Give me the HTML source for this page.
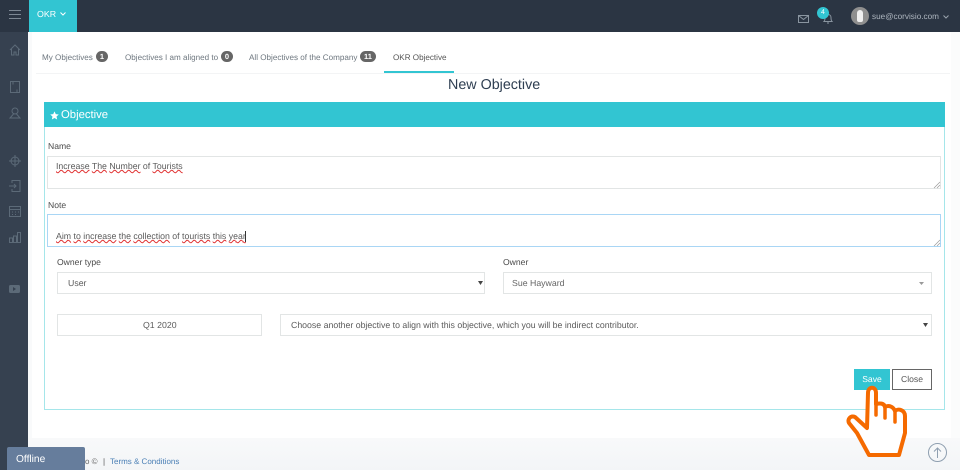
<!DOCTYPE html>
<html><head><meta charset="utf-8">
<style>
*{box-sizing:border-box}
html,body{margin:0;padding:0;width:960px;height:470px;overflow:hidden;background:#fff;font-family:"Liberation Sans",sans-serif;color:#555;text-rendering:geometricPrecision}
.a{position:absolute;white-space:nowrap}
.box{position:absolute;background:#fff;border:1px solid #e2e5e5}
.sp{text-decoration:underline wavy #e03030 1px;text-underline-offset:0;text-decoration-skip-ink:none}
.badge{position:absolute;background:#666;color:#fff;font-size:7.500px;font-weight:bold;border-radius:7px;height:11px;line-height:11px;text-align:center}
.tab{position:absolute;top:52px;font-size:8.100px;color:#6f7880;white-space:nowrap;line-height:11px}
svg{position:absolute;overflow:visible}
.ic{fill:none;stroke:#5c6a78;stroke-width:1}
.lab{position:absolute;font-size:8.600px;color:#4a4a4a;line-height:11px;white-space:nowrap}
.val{font-size:8.750px;color:#5a5a5a;line-height:11px;white-space:nowrap;position:absolute}
</style></head><body>
<div class="a" style="left:0;top:0;width:960px;height:32px;background:#2b3543"></div>
<div class="a" style="left:29px;top:0;width:48px;height:32px;background:#32c5d2"></div>
<div class="a" style="left:37px;top:9px;font-size:8.800px;line-height:11px;color:#fff">OKR</div>
<svg style="left:60px;top:12px" width="6" height="4"><path d="M.5.5 3 3 5.500.5" fill="none" stroke="#fff"/></svg>
<svg style="left:9px;top:10px" width="12" height="10"><path d="M0 .5h12M0 4.500h12M0 8.500h12" stroke="#7d8894" fill="none"/></svg>
<div class="a" style="left:0;top:32px;width:28px;height:438px;background:#364150"></div>
<div class="a" style="left:28px;top:32px;width:932px;height:438px;background:#fff"></div>
<div class="a" style="left:28px;top:32px;width:4px;height:406px;background:#f9fafb"></div>
<div class="a" style="left:951px;top:32px;width:9px;height:406px;background:#fbfcfc"></div>

<svg class="ic" style="left:9px;top:44px" width="12" height="12"><path d="M1 6 6 1l5 5M2.500 5v6h2.500V8h2v3h2.500V5"/></svg>
<svg class="ic" style="left:10px;top:81px" width="10" height="12"><path d="M.5.5h9v11h-9zM3 .5v3M7 8.500v3"/></svg>
<svg class="ic" style="left:9px;top:107px" width="12" height="12"><circle cx="6" cy="4" r="3"/><path d="M4.500 7 1 11h10L7.500 7"/></svg>
<svg class="ic" style="left:9px;top:155px" width="12" height="12"><circle cx="6" cy="6" r="4"/><path d="M6 0v12M0 6h12"/></svg>
<svg class="ic" style="left:9px;top:180px" width="12" height="12"><path d="M3 3V.5h8v11H3V9M0 6h7M5 4l2 2-2 2"/></svg>
<svg class="ic" style="left:9px;top:205px" width="12" height="12"><path d="M.5 1.500h11v10H.5zM.5 4.500h11M3 7h1M6 7h1M9 7h1M3 9.500h1M6 9.500h1"/></svg>
<svg class="ic" style="left:9px;top:231px" width="12" height="12"><path d="M.5 7h3v4.500h-3zM4.500 5h3v6.500h-3zM8.500 1.500h3v10h-3z"/></svg>
<svg style="left:9px;top:285px" width="11" height="8"><rect width="11" height="8" rx="1.500" fill="#5c6a78"/><path d="M4 2v4l3-2z" fill="#364150"/></svg>

<svg class="ic" style="left:798px;top:15px;stroke:#8a95a0" width="11" height="8"><path d="M.5.500h10v7H.5zM.5.500 5.500 4.500 10.500.500"/></svg>
<svg class="ic" style="left:823px;top:13px;stroke:#8a95a0" width="10" height="11"><path d="M1 8.500c1-1 1-2 1-4s1.500-3 3-3 3 1 3 3 0 3 1 4zM4 10h2"/></svg>
<div class="a" style="left:817px;top:7px;width:12px;height:12px;border-radius:50%;background:#32c5d2;color:#fff;font-size:7px;line-height:12px;text-align:center">4</div>
<div class="a" style="left:851px;top:7px;width:18px;height:18px;border-radius:50%;background:#8f8f8f"></div>
<div class="a" style="left:857px;top:10px;width:6px;height:12px;border-radius:3px 3px 2px 2px;background:#f0f0f0"></div>
<div class="a" style="left:872px;top:11px;font-size:8.200px;line-height:11px;color:#aeb6bf">sue@corvisio.com</div>
<svg style="left:943px;top:15px" width="6" height="4"><path d="M.5.5 3 3 5.500.5" fill="none" stroke="#9aa3ad"/></svg>

<div class="tab" style="left:42px">My Objectives</div>
<div class="badge" style="left:96px;top:51px;width:12px">1</div>
<div class="tab" style="left:125px">Objectives I am aligned to</div>
<div class="badge" style="left:221px;top:51px;width:12px">0</div>
<div class="tab" style="left:249px">All Objectives of the Company</div>
<div class="badge" style="left:360px;top:51px;width:16px">11</div>
<div class="tab" style="left:393px;color:#555">OKR Objective</div>
<div class="a" style="left:36px;top:73px;width:914px;height:1px;background:#f3f4f5"></div>
<div class="a" style="left:384px;top:71px;width:70px;height:2px;background:#32c5d2"></div>
<div class="a" style="left:448px;top:76px;font-size:14.300px;line-height:18px;color:#2f3f52">New Objective</div>

<div class="a" style="left:44px;top:102px;width:901px;height:308px;border:1px solid #a5e6ea;border-top:0"></div>
<div class="a" style="left:44px;top:102px;width:901px;height:25px;background:#32c5d2"></div>
<svg style="left:50px;top:111px" width="9" height="9" viewBox="0 0 24 24"><path d="M12 1l3.400 7.400 8 .9-6 5.400 1.700 8L12 18.700 4.900 22.700l1.700-8-6-5.400 8-.9z" fill="#fff"/></svg>
<div class="a" style="left:61px;top:108px;font-size:11.300px;line-height:14px;color:#fff">Objective</div>

<div class="lab" style="left:48px;top:141px">Name</div>
<div class="box" style="left:47px;top:156px;width:894px;height:33px"></div>
<div class="val" style="left:56px;top:161px"><span class="sp">Increase</span> <span class="sp">The</span> <span class="sp">Number</span> of <span class="sp">Tourists</span></div>
<svg style="left:934px;top:182px" width="6" height="6"><path d="M0 6 6 0M3 6l3-3" stroke="#999" stroke-width=".7"/></svg>

<div class="lab" style="left:48px;top:200px">Note</div>
<div class="box" style="left:47px;top:214px;width:894px;height:33px;border-color:#a9d6f5"></div>
<div class="val" style="left:56px;top:231px"><span class="sp">Aim</span> <span class="sp">to</span> <span class="sp">increase</span> <span class="sp">the</span> <span class="sp">collection</span> of <span class="sp">tourists</span> <span class="sp">this</span> <span class="sp">year</span></div>
<div class="a" style="left:245px;top:231px;width:1px;height:11px;background:#333"></div>
<svg style="left:934px;top:240px" width="6" height="6"><path d="M0 6 6 0M3 6l3-3" stroke="#999" stroke-width=".7"/></svg>

<div class="lab" style="left:57px;top:257px">Owner type</div>
<div class="box" style="left:57px;top:272px;width:428px;height:22px"></div>
<div class="val" style="left:68px;top:278px">User</div>
<svg style="left:478px;top:281px" width="5" height="4"><path d="M0 0h5L2.500 4z" fill="#444"/></svg>

<div class="lab" style="left:503px;top:257px">Owner</div>
<div class="box" style="left:503px;top:272px;width:429px;height:22px"></div>
<div class="val" style="left:512px;top:278px;color:#666">Sue Hayward</div>
<svg style="left:919px;top:282px" width="5" height="3"><path d="M0 0h5L2.500 3z" fill="#999"/></svg>

<div class="box" style="left:57px;top:314px;width:205px;height:22px"></div>
<div class="val" style="left:143px;top:320px">Q1 2020</div>
<div class="box" style="left:280px;top:314px;width:652px;height:22px"></div>
<div class="val" style="left:291px;top:320px">Choose another objective to align with this objective, which you will be indirect contributor.</div>
<svg style="left:923px;top:323px" width="5" height="4"><path d="M0 0h5L2.500 4z" fill="#444"/></svg>

<div class="a" style="left:854px;top:369px;width:36px;height:21px;background:#32c5d2;color:#fff;font-size:8.600px;line-height:21px;text-align:center">Save</div>
<div class="a" style="left:892px;top:369px;width:40px;height:21px;border:1px solid #666;background:#fff;color:#555;font-size:8.600px;line-height:19px;text-align:center">Close</div>

<div class="a" style="left:28px;top:438px;width:932px;height:32px;background:linear-gradient(#f8f9fa,#f3f5f7)"></div>
<div class="a" style="left:85px;top:456px;font-size:8px;line-height:11px;color:#666">o ©</div>
<div class="a" style="left:103px;top:456px;font-size:8px;line-height:11px;color:#555">|</div>
<div class="a" style="left:110px;top:456px;font-size:8px;line-height:11px;color:#4a7fb5">Terms &amp; Conditions</div>
<div class="a" style="left:7px;top:447px;width:78px;height:23px;background:#667d9c;border-radius:2px 2px 0 0;color:#fff;font-size:10.200px;line-height:26px;padding-left:9px">Offline</div>

<svg style="left:928px;top:443px" width="20" height="20"><circle cx="9.500" cy="9.500" r="9" fill="none" stroke="#8f9fb0"/><path d="M9.500 15V5M6 8.500 9.500 5 13 8.500" fill="none" stroke="#8f9fb0"/></svg>

<svg style="left:0;top:0" width="960" height="470"><path d="M869 455 857 433 849 423C847 419 851 415 855 417L867 428 868 393C868 386 876 386 876 393L876 404C880 403 884 403 885 407 888 405 893 406 895 411 898 408 905 410 905 416L905 433 899 455Z" fill="#fff" stroke="#f56a00" stroke-width="4" stroke-linejoin="round"/><path d="M876 402V415M885 407V418M895 411V422" stroke="#f56a00" stroke-width="3.500" fill="none" stroke-linecap="round"/></svg>
</body></html>
